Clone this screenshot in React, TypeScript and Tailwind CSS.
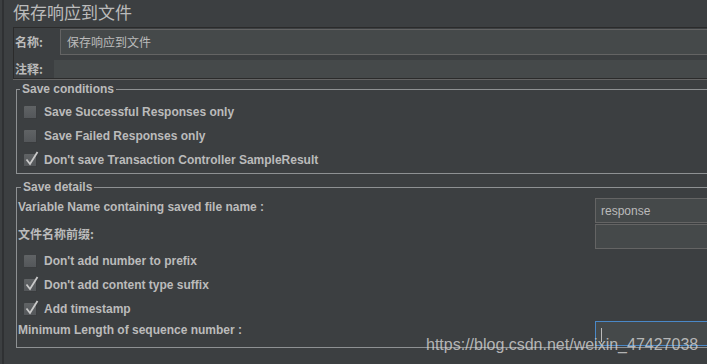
import React from 'react';

const en = "font-['Liberation_Sans','Noto_Sans_CJK_SC',sans-serif]";
const cjk = "font-['Noto_Sans_CJK_SC','Liberation_Sans',sans-serif]";

function CheckBox({ checked }: { checked?: boolean }) {
  return (
    <div className="relative w-[13px] h-[13px] shrink-0 rounded-[1px] bg-gradient-to-b from-[#606365] to-[#54575a] border-b border-r border-[#3a3c3e]">
      {checked && (
        <svg
          className="absolute left-[1px] top-[-3px]"
          width="14"
          height="15"
          viewBox="0 0 14 15"
        >
          <path d="M1.5 8.5 L5 13 L12.5 1" fill="none" stroke="#c9c9c9" strokeWidth="1.8" />
        </svg>
      )}
    </div>
  );
}

function CheckRow({ label, checked }: { label: string; checked?: boolean }) {
  return (
    <div className="flex items-center h-[24px] pl-[7px] gap-[7px]">
      <CheckBox checked={checked} />
      <span className={`${en} text-[12px] font-bold text-[#bbbbbb] leading-[14px]`}>{label}</span>
    </div>
  );
}

function Field({ value, focused }: { value?: string; focused?: boolean }) {
  return (
    <div
      className={`w-[130px] h-[25px] shrink-0 bg-[#45494a] border flex items-center px-[5px] ${
        focused ? 'border-[#4a88c7]' : 'border-[#646464]'
      }`}
    >
      {focused && <div className="w-px h-[14px] bg-[#bbbbbb] mt-[2px]" />}
      {value && <span className={`${en} text-[12px] text-[#bbbbbb]`}>{value}</span>}
    </div>
  );
}

export default function App() {
  return (
    <div className="relative w-[707px] h-[364px] overflow-hidden bg-[#3c3f41]">
      <div className="absolute left-[2px] top-0 bottom-0 w-[2px] bg-[#2f3133]" />

      <div className="w-[760px] pl-[13px] flex flex-col">
        {/* TITLE */}
        <h1 className={`${cjk} text-[17px] leading-[24px] text-[#bbbbbb] h-[27px]`}>
          保存响应到文件
        </h1>

        {/* NAME / COMMENT */}
        <div className="border-b border-[#646464]">
          <div className="border-t border-l border-b border-[#2b2b2b] pl-[1px] pt-[1px] flex flex-col gap-[5px]">
            <div className="flex items-center">
              <span className={`${cjk} w-[45px] text-[12px] font-bold text-[#bbbbbb]`}>名称:</span>
              <div className="flex-1 h-[26px] bg-[#45494a] border border-[#646464] flex items-center pl-[6px]">
                <span className={`${cjk} text-[12px] text-[#bbbbbb]`}>保存响应到文件</span>
              </div>
            </div>
            <div className="flex items-center">
              <span className={`${cjk} w-[39px] text-[12px] font-bold text-[#bbbbbb]`}>注释:</span>
              <div className="flex-1 h-[18px] bg-[#45494a]" />
            </div>
          </div>
        </div>

        {/* SAVE CONDITIONS */}
        <fieldset className="ml-[3px] mt-[2px] border border-r-0 border-[#8e9193] pt-[4px] pb-[1px]">
          <legend className={`${en} ml-[3px] px-[2px] text-[12px] font-bold leading-[14px] text-[#bbbbbb]`}>
            Save conditions
          </legend>
          <CheckRow label="Save Successful Responses only" />
          <CheckRow label="Save Failed Responses only" />
          <CheckRow label="Don't save Transaction Controller SampleResult" checked />
        </fieldset>

        {/* SAVE DETAILS */}
        <fieldset className="ml-[3px] mt-[6px] border border-r-0 border-[#8e9193] pl-[1px] pt-[4px] pb-[1px]">
          <legend className={`${en} ml-[3px] px-[2px] text-[12px] font-bold leading-[14px] text-[#bbbbbb]`}>
            Save details
          </legend>
          <div className="flex flex-col gap-[1px]">
            <div className="flex items-start">
              <span className={`${en} flex-none w-[577px] pt-[2px] text-[12px] font-bold leading-[14px] text-[#bbbbbb]`}>
                Variable Name containing saved file name :
              </span>
              <Field value="response" />
            </div>
            <div className="flex items-start">
              <span className={`${cjk} flex-none w-[577px] pt-[2px] text-[12px] font-bold leading-[16px] text-[#bbbbbb]`}>
                文件名称前缀:
              </span>
              <Field />
            </div>
          </div>
          <div className="-ml-[1px]">
            <CheckRow label="Don't add number to prefix" />
            <CheckRow label="Don't add content type suffix" checked />
            <CheckRow label="Add timestamp" checked />
          </div>
          <div className="flex items-start">
            <span className={`${en} flex-none w-[577px] pt-[2px] text-[12px] font-bold leading-[14px] text-[#bbbbbb]`}>
              Minimum Length of sequence number :
            </span>
            <Field focused />
          </div>
        </fieldset>
      </div>

      {/* WATERMARK */}
      <div
        className={`absolute left-[426px] top-[335px] ${en} text-[16px] leading-[20px] text-[#d4d4d4]/80`}
      >
        https://blog.csdn.net/weixin_47427038
      </div>
    </div>
  );
}
